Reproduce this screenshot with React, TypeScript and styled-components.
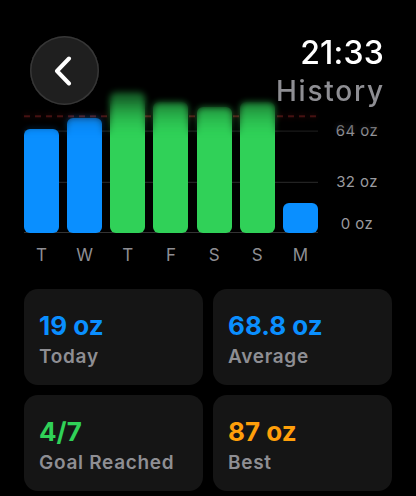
import React from 'react';
import styled, { createGlobalStyle } from 'styled-components';

const GlobalStyle = createGlobalStyle`
html, body {
    margin: 0;
    padding: 0;
    background: #000;
}
body {
    font-family: Inter, "Noto Sans", "Liberation Sans", sans-serif;
    -webkit-font-smoothing: antialiased;
}
`

const BLUE = '#0a8fff';
const GREEN = '#30d158';
const ORANGE = '#ff9f0a';

// oz per day, Tue → Mon
const days = [
    { day: 'T', oz: 65 },
    { day: 'W', oz: 72 },
    { day: 'T', oz: 88 },
    { day: 'F', oz: 82 },
    { day: 'S', oz: 79 },
    { day: 'S', oz: 82 },
    { day: 'M', oz: 18.5 },
];
const GOAL = 73;
const PX_PER_OZ = 1.6;
const PLOT_H = 145;

const stats = [
    { value: '19 oz', label: 'Today', color: BLUE },
    { value: '68.8 oz', label: 'Average', color: BLUE },
    { value: '4/7', label: 'Goal Reached', color: GREEN },
    { value: '87 oz', label: 'Best', color: ORANGE },
];

const ChevronLeft = () => (
    <svg width="20" height="30" viewBox="0 0 20 30" fill="none">
        <path d="M16 2.5 L4 15 L16 27.5" stroke="#fff" strokeWidth="4" strokeLinecap="round" strokeLinejoin="round" />
    </svg>
);

export default function App() {
    const y = (oz: number) => PLOT_H - oz * PX_PER_OZ;
    return (
        <Screen>
            <GlobalStyle />
            <Header>
                <BackButton aria-label="Back">
                    <ChevronLeft />
                </BackButton>
                <Titles>
                    <Clock>21:33</Clock>
                    <Title>History</Title>
                </Titles>
            </Header>

            <Chart>
                <ChartRow>
                    <Plot>
                        <Grid width="294" height={PLOT_H} viewBox={`0 0 294 ${PLOT_H}`}>
                            <line x1="0" x2="294" y1={y(64) + 0.5} y2={y(64) + 0.5} stroke="#2b2b2b" />
                            <line x1="0" x2="294" y1={y(32) + 0.5} y2={y(32) + 0.5} stroke="#2b2b2b" />
                            <line x1="0" x2="294" y1={PLOT_H - 0.5} y2={PLOT_H - 0.5} stroke="#333" />
                            <line x1="0" x2="294" y1={y(GOAL)} y2={y(GOAL)} stroke="#a32a2a" strokeWidth="2" strokeDasharray="6 5" />
                        </Grid>
                        <Bars>
                            {days.map((d, i) => (
                                <Bar key={i} $color={d.oz >= GOAL ? GREEN : BLUE} style={{ height: d.oz * PX_PER_OZ }} />
                            ))}
                        </Bars>
                    </Plot>
                    <Axis>
                        <AxisLabel $top={y(64) - 9}>64 oz</AxisLabel>
                        <AxisLabel $top={y(32) - 9}>32 oz</AxisLabel>
                        <AxisLabel $top={PLOT_H - 18}>0 oz</AxisLabel>
                    </Axis>
                </ChartRow>
                <Days>
                    {days.map((d, i) => <DayLabel key={i}>{d.day}</DayLabel>)}
                </Days>
            </Chart>

            <Cards>
                {stats.map((s) => (
                    <Card key={s.label}>
                        <Value $color={s.color}>{s.value}</Value>
                        <Label>{s.label}</Label>
                    </Card>
                ))}
            </Cards>
        </Screen>
    );
}

const Screen = styled.div`
position: relative;
width: 416px;
height: 496px;
overflow: hidden;
background: #000;
color: #fff;
`

const Header = styled.div`
position: absolute;
top: 0;
left: 0;
right: 0;
height: 138px;
z-index: 2;
display: flex;
justify-content: space-between;
align-items: flex-start;
padding: 36px 32px 0 30px;
box-sizing: border-box;
&::before {
    content: '';
    position: absolute;
    inset: 0;
    z-index: -1;
    background: linear-gradient(to bottom, rgba(0,0,0,0.8) 0%, rgba(0,0,0,0.6) 66%, rgba(0,0,0,0) 100%);
    backdrop-filter: blur(3px);
    -webkit-mask-image: linear-gradient(to bottom, #000 72%, transparent 100%);
    mask-image: linear-gradient(to bottom, #000 72%, transparent 100%);
}
`

const BackButton = styled.div`
width: 69px;
height: 69px;
border-radius: 50%;
background: #1f1f1f;
box-shadow: inset 0 0 0 1.5px #363636;
display: flex;
align-items: center;
justify-content: center;
svg {
    margin-left: -4px;
}
`

const Titles = styled.div`
display: flex;
flex-direction: column;
align-items: flex-end;
`

const Clock = styled.div`
font-size: 32px;
font-weight: 500;
line-height: 38px;
margin-top: -2px;
letter-spacing: 0.2px;
color: #fff;
`

const Title = styled.div`
font-size: 28px;
font-weight: 500;
line-height: 34px;
margin-top: 2px;
margin-right: -1px;
letter-spacing: 1.8px;
color: #8e8e93;
`

const Chart = styled.div`
padding: 88px 0 0 24px;
`

const ChartRow = styled.div`
display: flex;
`

const Plot = styled.div`
position: relative;
width: 294px;
height: ${PLOT_H}px;
`

const Grid = styled.svg`
position: absolute;
inset: 0;
display: block;
`

const Bars = styled.div`
position: relative;
height: 100%;
display: flex;
align-items: flex-end;
justify-content: space-between;
`

const Bar = styled.div<{ $color: string }>`
width: 35px;
border-radius: 6px;
background: ${(p) => p.$color};
`

const Axis = styled.div`
position: relative;
width: 78px;
`

const AxisLabel = styled.span<{ $top: number }>`
position: absolute;
top: ${(p) => p.$top}px;
left: 0;
right: 0;
text-align: center;
font-size: 15px;
line-height: 18px;
letter-spacing: 0.4px;
color: #9a9a9f;
`

const Days = styled.div`
display: flex;
justify-content: space-between;
width: 294px;
margin-top: 12px;
`

const DayLabel = styled.div`
width: 35px;
text-align: center;
font-size: 17px;
line-height: 20px;
color: #8e8e93;
`

const Cards = styled.div`
display: grid;
grid-template-columns: 179px 179px;
grid-auto-rows: 96px;
gap: 10px;
padding: 24px 24px 0;
`

const Card = styled.div`
background: #151515;
border-radius: 14px;
padding: 21px 15px 0;
box-sizing: border-box;
`

const Value = styled.div<{ $color: string }>`
font-size: 26px;
font-weight: 700;
line-height: 32px;
color: ${(p) => p.$color};
`

const Label = styled.div`
font-size: 19px;
font-weight: 600;
line-height: 24px;
margin-top: 3px;
letter-spacing: 0.7px;
color: #8e8e93;
`
